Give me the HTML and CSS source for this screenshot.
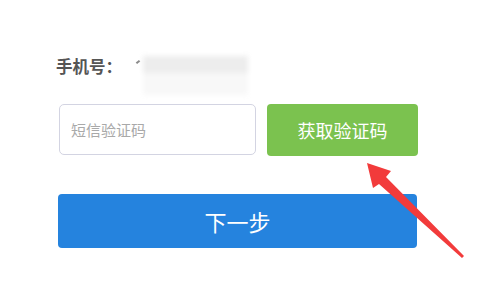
FILE: index.html
```html
<!DOCTYPE html>
<html lang="zh">
<head>
<meta charset="utf-8">
<link rel="stylesheet" href="styles.css">
</head>
<body>
<div class="page">
  <div class="phone-row">
    <span class="label">手机号：</span>
    <span class="tick"></span>
    <div class="masked">
      <div class="masked-top"></div>
      <div class="masked-bottom"></div>
    </div>
  </div>
  <div class="code-row">
    <input class="code-input" type="text" placeholder="短信验证码">
    <button class="get-code">获取验证码</button>
  </div>
  <button class="next">下一步</button>
  <svg class="arrow" width="480" height="286" viewBox="0 0 480 286">
    <polygon points="367,163 391,171 386,177 464,256 462,258 379,184 373,188" fill="#f23b3b"/>
  </svg>
</div>
</body>
</html>
```
FILE: styles.css
```css
* { box-sizing: border-box; }
html, body { margin: 0; padding: 0; background: #fff; }
body {
  width: 480px;
  height: 286px;
  overflow: hidden;
  font-family: "Noto Sans CJK SC", "Noto Sans", sans-serif;
}
.page {
  position: relative;
  padding: 48px 0 0 56px;
  height: 286px;
}
.phone-row {
  display: flex;
  align-items: center;
  height: 36px;
  margin-bottom: 20px;
}
.label {
  font-size: 16.5px;
  font-weight: bold;
  color: #555;
  line-height: 1;
}
.tick {
  width: 4px;
  height: 2px;
  background: #888;
  transform: rotate(-40deg);
  margin-left: 14px;
  margin-top: -8px;
  filter: blur(0.4px);
}
.masked {
  width: 105px;
  height: 40px;
  margin-left: 3px;
  margin-top: 20px;
  display: flex;
  flex-direction: column;
  filter: blur(2.5px);
}
.masked-top { height: 17px; background: #ededed; }
.masked-bottom { height: 22px; background: #f8f8f8; }
.code-row {
  display: flex;
  gap: 11px;
  height: 52px;
  margin-bottom: 38px;
}
.code-input {
  width: 197px;
  height: 51px;
  margin: 0 0 0 3px;
  border: 1px solid #d3d4e2;
  border-radius: 5px;
  padding: 0 0 0 11px;
  font-family: inherit;
  font-size: 15px;
  color: #333;
  outline: none;
  background: #fff;
}
.code-input::placeholder { color: #a9a9a9; }
.get-code {
  width: 151px;
  height: 52px;
  border: none;
  border-radius: 4px;
  background: #7bc24f;
  color: #fff;
  font-family: inherit;
  font-size: 18px;
  padding: 0;
}
.next {
  display: block;
  width: 359px;
  height: 54px;
  margin-left: 2px;
  border: none;
  border-radius: 4px;
  background: #2583de;
  color: #fff;
  font-family: inherit;
  font-size: 22px;
  padding: 0;
}
.arrow {
  position: absolute;
  left: 0;
  top: 0;
  pointer-events: none;
}
```
